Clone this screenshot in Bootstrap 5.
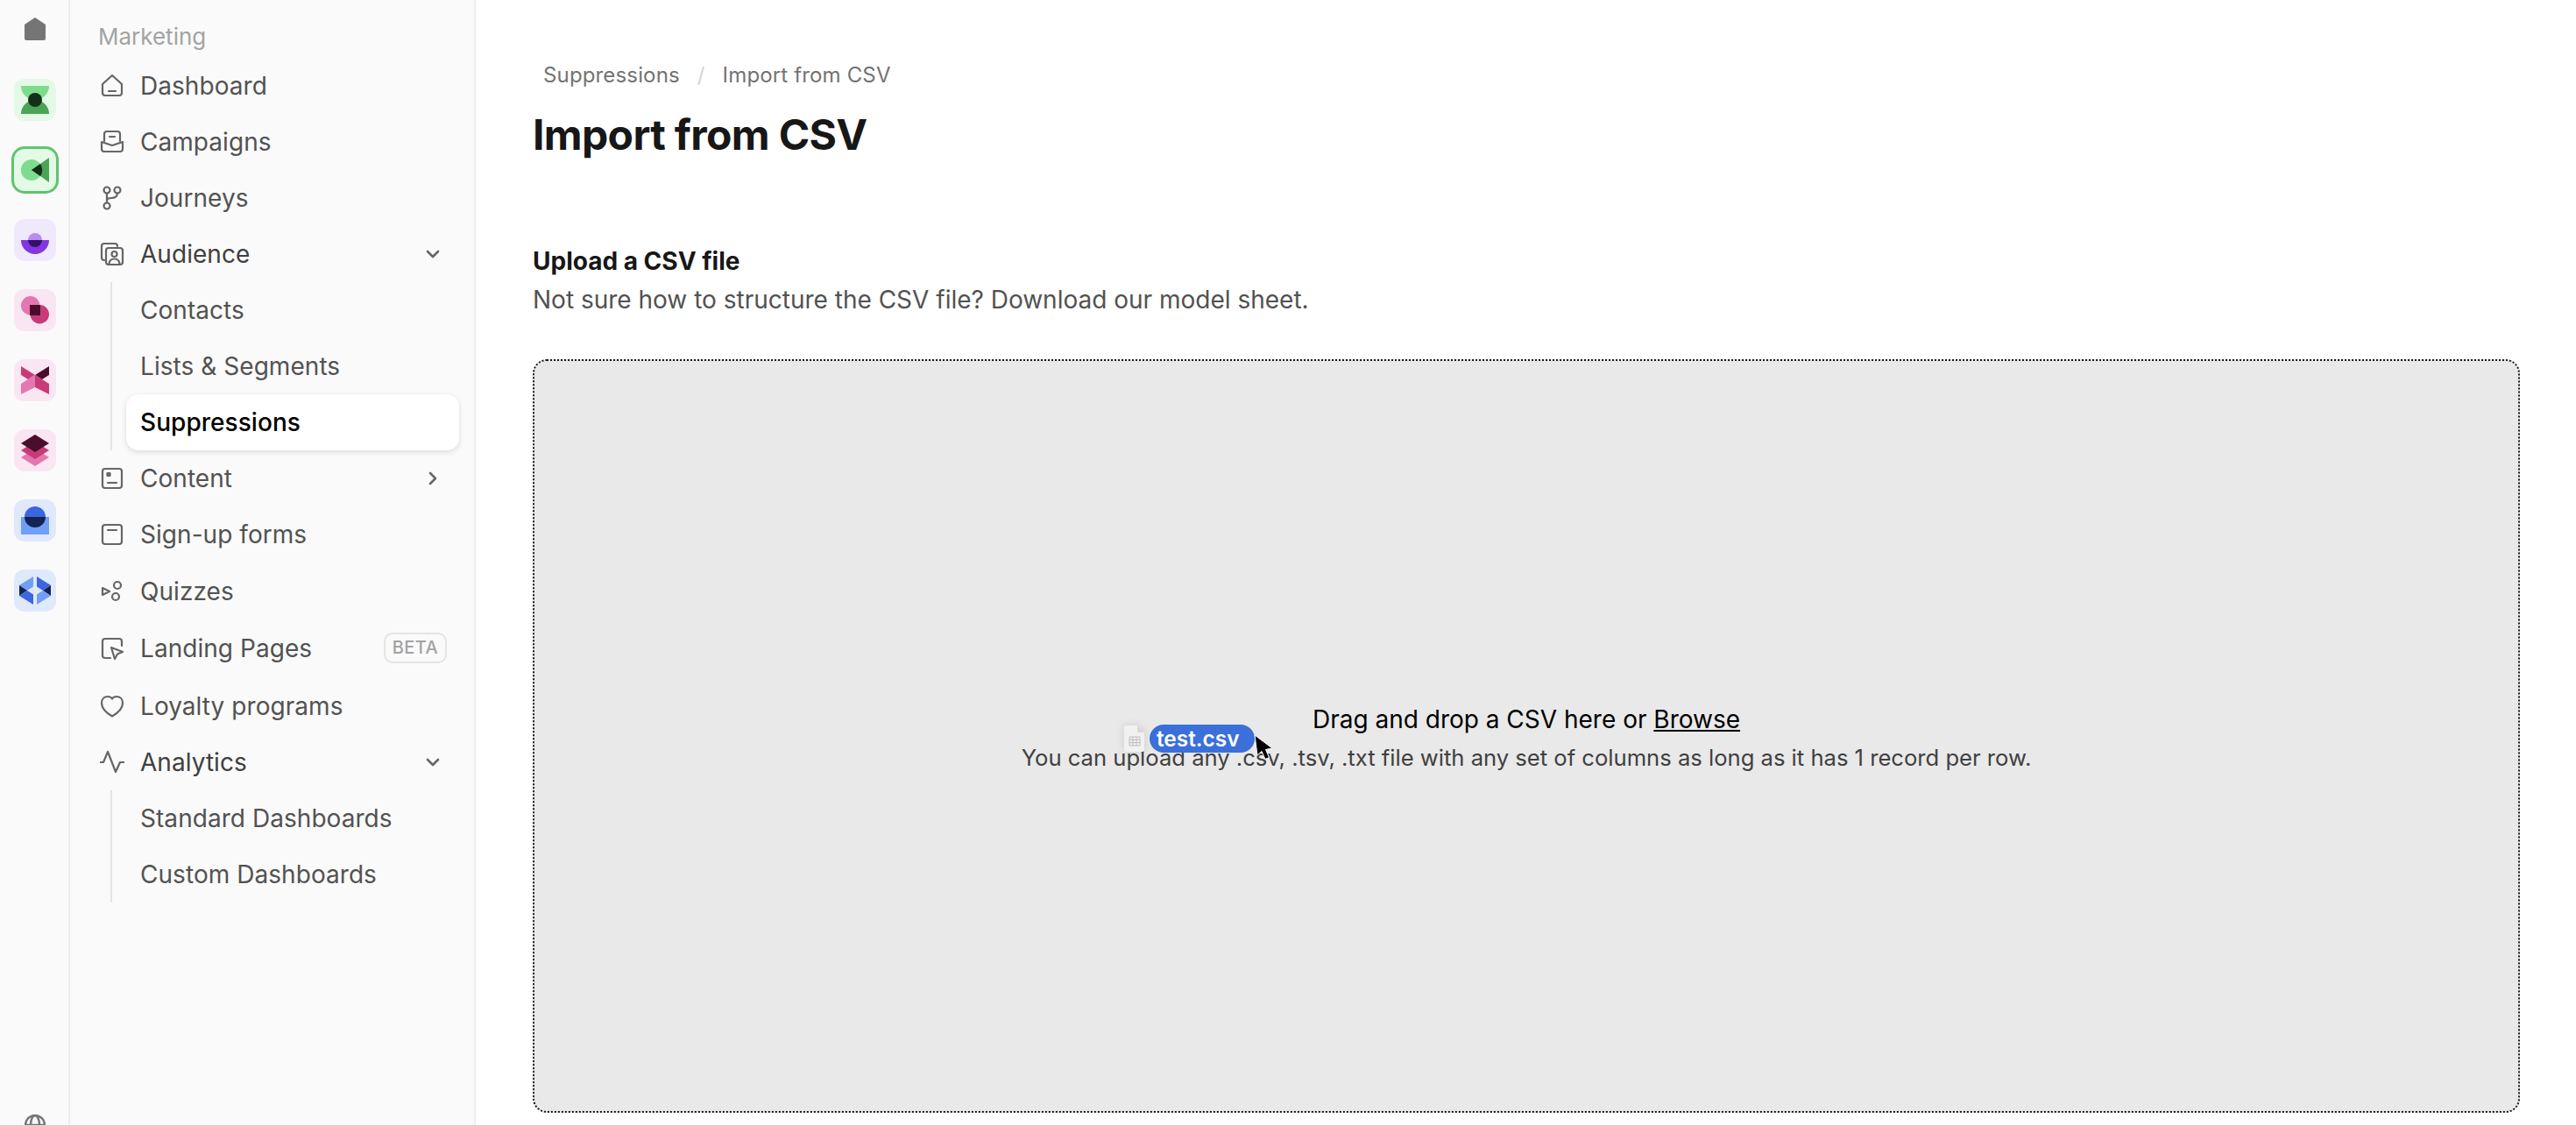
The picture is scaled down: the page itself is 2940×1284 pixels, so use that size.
<!DOCTYPE html>
<html lang="en">
<head>
    <meta charset="UTF-8">
    <meta name="viewport" content="width=device-width, initial-scale=1.0">
    <title>Import from CSV</title>
    <link rel="stylesheet" href="https://cdn.jsdelivr.net/npm/bootstrap@5.3.2/dist/css/bootstrap.min.css">
    <style>
        body { font-family: Inter, "Liberation Sans", sans-serif; background: #fff; color: #171717; }
        .app-shell { height: 1284px; overflow: hidden; }
        /* app rail */
        .app-rail { width: 80px; background: #fafafa; border-right: 2px solid #eeeeee; padding: 20px 0 0 2px; flex: none; }
        .rail-home { width: 24px; height: 26px; margin-bottom: 44px; }
        .rail-tile { width: 48px; height: 48px; border-radius: 12px; margin-bottom: 32px; display: block; flex: none; }
        .rail-tile.is-active { outline: 3px solid #5fc46c; outline-offset: 0; }
        .tile-green { background: #e4f9e6; }
        .tile-purple { background: #f0e8fd; }
        .tile-pink { background: #f9e6f2; }
        .tile-blue { background: #dfe9fb; }
        .rail-globe { margin-top: auto; margin-bottom: -12px; width: 24px; height: 24px; }
        /* sidebar */
        .side-menu { width: 463px; background: #fafafa; border-right: 2px solid #eeeeee; padding: 26px 17px 0 34px; flex: none; }
        .side-title { font-size: 26px; line-height: 32px; color: #a3a3a3; margin-bottom: 8px; margin-left: -2px; }
        .side-link { height: 64px; display: flex; align-items: center; gap: 18px; font-size: 28px; color: #525252; text-decoration: none; padding: 0; letter-spacing: .05px; }
        .side-link svg { width: 28px; height: 28px; flex: none; fill: none; stroke: #666; stroke-width: 2.2; stroke-linejoin: round; stroke-linecap: round; }
        .side-link.is-open { color: #404040; }
        .side-link .side-chevron { width: 20px; height: 20px; margin-left: auto; margin-right: 20px; stroke-width: 2.6; }
        .side-link.is-tall { height: 65px; }
        .side-link.is-lower { margin-top: 2px; }
        .side-beta { margin-left: auto; border: 2px solid #e5e5e5; border-radius: 10px; color: #a3a3a3; background: transparent; font-size: 20px; font-weight: 500; line-height: 31px; padding: 0 8px; letter-spacing: .4px; margin-right: 14px; }
        .side-sub { margin-left: 12px; border-left: 2px solid #e5e5e5; padding-left: 16px; }
        .side-sub .side-link { padding-left: 16px; border-radius: 14px; }
        .side-sub .side-link.is-current { background: #fff; color: #000; font-weight: 500; box-shadow: 0 2px 6px rgba(0,0,0,.13); }
        /* main */
        .page-main { padding: 68px 64px 0 65px; }
        .page-crumbs { font-size: 24px; line-height: 36px; margin: 0 0 0 12px; letter-spacing: .15px; --bs-breadcrumb-item-padding-x: 20px; --bs-breadcrumb-margin-bottom: 0; }
        .page-crumbs .breadcrumb-item, .page-crumbs .breadcrumb-item.active { color: #737373; }
        .page-crumbs .breadcrumb-item + .breadcrumb-item::before { color: #d4d4d4; }
        .page-title { font-size: 48px; font-weight: 700; line-height: 64px; color: #171717; margin: 18px 0 0; letter-spacing: -.65px; }
        .upload-title { font-size: 28px; font-weight: 700; line-height: 44px; color: #171717; margin: 90px 0 0; }
        .upload-help { font-size: 28px; line-height: 44px; color: #525252; margin: 0 0 46px; }
        .drop-area { height: 860px; background: #e9e9e9; border: 2px dotted #171717; border-radius: 16px; position: relative; padding-top: 6px; }
        .drop-main { font-size: 28px; line-height: 44px; color: #000; margin: 0; }
        .drop-main a { color: #000; }
        .drop-hint { font-size: 25.6px; line-height: 44px; color: #404040; margin: 0; }
        /* file being dragged, lies over the text */
        .drag-ghost { position: absolute; left: 673px; top: 415px; display: flex; align-items: center; gap: 6px; }
        .drag-pill { background: #3b6fd9; color: #fff; font-size: 24.4px; font-weight: 600; line-height: 32px; border-radius: 16px; width: 120px; padding-left: 8px; }
        .drag-file { width: 23px; height: 30px; filter: drop-shadow(0 0 5px rgba(0,0,0,.12)); }
        .drag-cursor { position: absolute; left: 821px; top: 426px; width: 22px; height: 30px; }
    </style>
</head>
<body>
<div class="d-flex app-shell">

    <!-- Rail -->
    <div class="app-rail d-flex flex-column align-items-center">
        <svg class="rail-home" viewBox="0 0 24 26"><path d="M12 0 L24 8 V24 a2 2 0 0 1-2 2 H2 a2 2 0 0 1-2-2 V8Z" fill="#757575"/></svg>

        <svg class="rail-tile tile-green" viewBox="0 0 48 48">
            <path d="M8 8H40A16 16 0 0 1 8 8Z" fill="#7fdc8f"/>
            <path d="M8 40A16 16 0 0 1 40 40Z" fill="#4ba355"/>
            <circle cx="24" cy="24" r="8" fill="#123018"/>
        </svg>
        <svg class="rail-tile tile-green is-active" viewBox="0 0 48 48">
            <circle cx="20" cy="24" r="12" fill="#7fdc8f"/>
            <path d="M40 10V38L20 24Z" fill="#4ba355"/>
            <path d="M20 24L30 17A12 12 0 0 1 30 31Z" fill="#123018"/>
        </svg>
        <svg class="rail-tile tile-purple" viewBox="0 0 48 48">
            <path d="M8 24H40A16 16 0 0 1 8 24Z" fill="#8236e0"/>
            <path d="M16 24A8 8 0 0 1 32 24Z" fill="#b98cf0"/>
            <path d="M16 24H32A8 8 0 0 1 16 24Z" fill="#35106b"/>
        </svg>
        <svg class="rail-tile tile-pink" viewBox="0 0 48 48">
            <circle cx="18.7" cy="18.7" r="10.7" fill="#e377b0"/>
            <circle cx="29.3" cy="28.7" r="10.7" fill="#c93a78"/>
            <rect x="18" y="18" width="12" height="12" fill="#4a0e2c"/>
        </svg>
        <svg class="rail-tile tile-pink" viewBox="0 0 48 48">
            <path d="M8 8L24 18L16 23L8 18Z" fill="#c93a78"/>
            <path d="M40 8L24 18L32 23L40 18Z" fill="#4a0e2c"/>
            <path d="M8 28L24 18V32L8 40Z" fill="#e377b0"/>
            <path d="M40 28L24 18V32L40 40Z" fill="#c93a78"/>
        </svg>
        <svg class="rail-tile tile-pink" viewBox="0 0 48 48">
            <path d="M24 22L40 32L24 42L8 32Z" fill="#e377b0"/>
            <path d="M24 14L40 24L24 34L8 24Z" fill="#c93a78"/>
            <path d="M24 6L40 16L24 26L8 16Z" fill="#4a0e2c"/>
        </svg>
        <svg class="rail-tile tile-blue" viewBox="0 0 48 48">
            <rect x="8" y="20" width="32" height="20" fill="#6f9ff5"/>
            <path d="M12 20A12 12 0 0 1 36 20Z" fill="#3b66e0"/>
            <path d="M12 20H36A12 12 0 0 1 12 20Z" fill="#16224f"/>
        </svg>
        <svg class="rail-tile tile-blue" viewBox="0 0 48 48">
            <path d="M22 8L6 18L15 24L22 19.500Z" fill="#6f9ff5"/>
            <path d="M6 18L15 24L6 30Z" fill="#16224f"/>
            <path d="M6 30L15 24L22 28.500V40Z" fill="#3b66e0"/>
            <path d="M26 8L42 18L33 24L26 19.500Z" fill="#3b66e0"/>
            <path d="M42 18L33 24L42 30Z" fill="#16224f"/>
            <path d="M42 30L33 24L26 28.500V40Z" fill="#6f9ff5"/>
        </svg>

        <svg class="rail-globe" viewBox="0 0 24 24" fill="none" stroke="#757575" stroke-width="2.4">
            <circle cx="12" cy="12" r="11"/>
            <ellipse cx="12" cy="12" rx="5" ry="11"/>
            <path d="M1 12H23"/>
        </svg>
    </div>

    <!-- Sidebar -->
    <div class="side-menu">
        <div class="side-title">Marketing</div>
        <nav class="nav flex-column flex-nowrap">
            <a class="side-link" href="#">
                <svg viewBox="0 0 28 28"><path d="M3 12 L14 2 L25 12 V22 a3 3 0 0 1-3 3 H6 a3 3 0 0 1-3-3Z"/><path d="M10 20H18"/></svg>
                Dashboard
            </a>
            <a class="side-link" href="#">
                <svg viewBox="0 0 28 28"><path d="M5 13V5a3 3 0 0 1 3-3h12a3 3 0 0 1 3 3v8"/><path d="M2 14l12 4 12-4v8a3 3 0 0 1-3 3H5a3 3 0 0 1-3-3z"/><path d="M11 8h6"/></svg>
                Campaigns
            </a>
            <a class="side-link" href="#">
                <svg viewBox="0 0 28 28"><circle cx="8" cy="5" r="3.5"/><circle cx="20" cy="5" r="3.5"/><circle cx="8" cy="23" r="3.5"/><path d="M8 8.5V19.5"/><path d="M20 8.5c0 4-3 5.5-7 5.5c-3 0-5 1-5 3"/></svg>
                Journeys
            </a>
            <a class="side-link is-open" href="#">
                <svg viewBox="0 0 28 28"><path d="M5 21a3 3 0 0 1-3-3V5a3 3 0 0 1 3-3h12a3 3 0 0 1 3 3"/><rect x="7" y="7" width="19" height="19" rx="3"/><circle cx="16.5" cy="14" r="3"/><path d="M10.5 26c0-5 3-6.500 6-6.500s6 1.500 6 6.500"/></svg>
                Audience
                <svg class="side-chevron" viewBox="0 0 20 20"><path d="M4 7L10 13L16 7"/></svg>
            </a>
            <div class="side-sub">
                <a class="side-link" href="#">Contacts</a>
                <a class="side-link" href="#">Lists &amp; Segments</a>
                <a class="side-link is-current" href="#">Suppressions</a>
            </div>
            <a class="side-link" href="#">
                <svg viewBox="0 0 28 28"><rect x="3" y="3" width="22" height="22" rx="3"/><rect x="8.500" y="8" width="3" height="3" fill="#666"/><path d="M9 19H19"/></svg>
                Content
                <svg class="side-chevron" viewBox="0 0 20 20"><path d="M7 4L13 10L7 16"/></svg>
            </a>
            <a class="side-link" href="#">
                <svg viewBox="0 0 28 28"><rect x="3" y="3" width="22" height="22" rx="3"/><path d="M9 9H19"/></svg>
                Sign-up forms
            </a>
            <a class="side-link is-tall" href="#">
                <svg viewBox="0 0 28 28"><path d="M3 10L11 14L3 18Z"/><circle cx="20" cy="7" r="4"/><circle cx="18" cy="20" r="4"/></svg>
                Quizzes
            </a>
            <a class="side-link is-tall" href="#">
                <svg viewBox="0 0 28 28"><path d="M12 25H6a3 3 0 0 1-3-3V6a3 3 0 0 1 3-3H22a3 3 0 0 1 3 3V11"/><path d="M13 13L26 18L20 20.500L17 26Z"/></svg>
                Landing Pages
                <span class="badge side-beta">BETA</span>
            </a>
            <a class="side-link is-lower" href="#">
                <svg viewBox="0 0 28 28"><path d="M14 25.500C8 22 2 17 2 10.500C2 6 5 3 9 3c2 0 4 .8 5 2.500C15 3.800 17 3 19 3c4 0 7 3 7 7.500C26 17 20 22 14 25.500Z"/></svg>
                Loyalty programs
            </a>
            <a class="side-link is-open" href="#">
                <svg viewBox="0 0 28 28"><path d="M0 14H4L9 2L18 25L23 14H28"/></svg>
                Analytics
                <svg class="side-chevron" viewBox="0 0 20 20"><path d="M4 7L10 13L16 7"/></svg>
            </a>
            <div class="side-sub">
                <a class="side-link" href="#">Standard Dashboards</a>
                <a class="side-link" href="#">Custom Dashboards</a>
            </div>
        </nav>
    </div>

    <!-- Contenu principal -->
    <div class="page-main flex-grow-1">
        <ol class="breadcrumb page-crumbs">
            <li class="breadcrumb-item">Suppressions</li>
            <li class="breadcrumb-item active">Import from CSV</li>
        </ol>
        <h1 class="page-title">Import from CSV</h1>
        <h2 class="upload-title">Upload a CSV file</h2>
        <p class="upload-help">Not sure how to structure the CSV file? Download our model sheet.</p>

        <div class="drop-area d-flex flex-column align-items-center justify-content-center">
            <p class="drop-main">Drag and drop a CSV here or <a href="#">Browse</a></p>
            <p class="drop-hint">You can upload any .csv, .tsv, .txt file with any set of columns as long as it has 1 record per row.</p>

            <div class="drag-ghost">
                <svg class="drag-file" viewBox="0 0 23 30">
                    <path d="M2 0H15L23 8V28a2 2 0 0 1-2 2H2a2 2 0 0 1-2-2V2a2 2 0 0 1 2-2Z" fill="#f1f1f1"/>
                    <path d="M15 0L23 8H15Z" fill="#d9d9d9"/>
                    <path d="M6 13H18V23H6ZM6 16.300H18M6 19.600H18M10 13V23M14 13V23" fill="none" stroke="#bdbdbd" stroke-width="1"/>
                </svg>
                <span class="drag-pill">test.csv</span>
            </div>
            <svg class="drag-cursor" viewBox="0 0 22 30">
                <path d="M1 1L4 24L9 19.500L13 28.500L17.500 26.500L13.500 17.500L21 16Z" fill="#000" stroke="#fff" stroke-width="1"/>
            </svg>
        </div>
    </div>
</div>
<script src="https://cdn.jsdelivr.net/npm/bootstrap@5.3.2/dist/js/bootstrap.bundle.min.js"></script>
</body>
</html>
